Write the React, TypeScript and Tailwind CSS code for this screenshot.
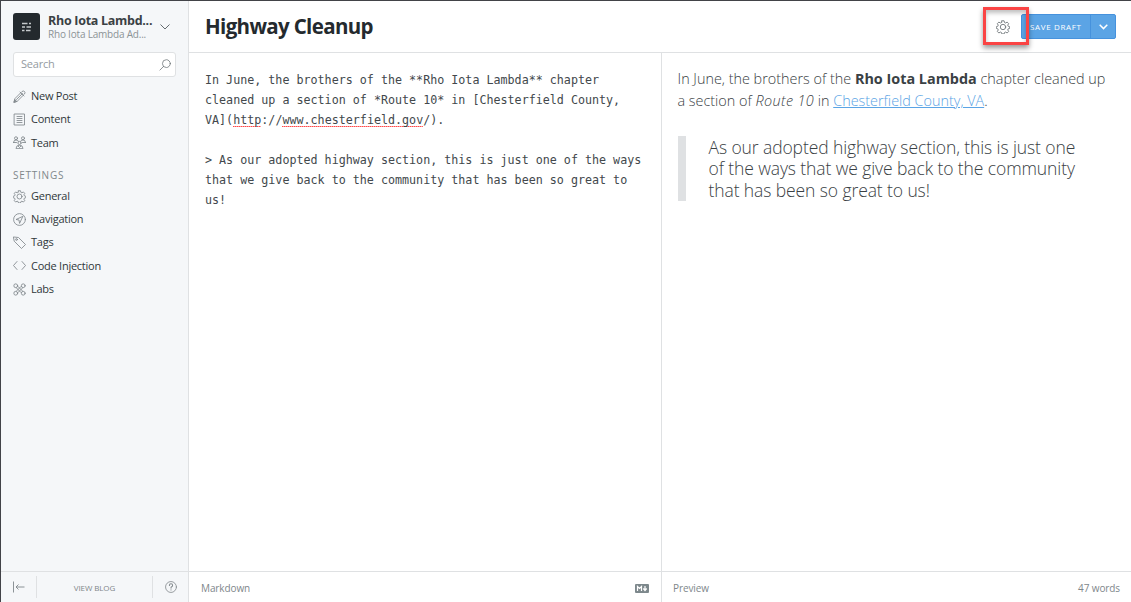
import type { ReactNode } from 'react';

function Icon({ children, className = 'size-[13px]' }: { children: ReactNode; className?: string }) {
  return (
    <svg viewBox="0 0 26 26" className={`shrink-0 ${className}`} fill="none" stroke="currentColor" strokeWidth="1.7" strokeLinecap="round" strokeLinejoin="round">
      {children}
    </svg>
  );
}

const gear = (
  <>
    <path d="M11 1.5h4l.8 3.2 2 .9 2.9-1.7 2.8 2.8-1.7 2.9.9 2 2.8.9v3l-2.8.9-.9 2 1.7 2.9-2.8 2.8-2.9-1.7-2 .9-.8 2.7h-4l-.8-2.7-2-.9-2.9 1.7-2.8-2.8 1.7-2.9-.9-2-2.8-.9v-3l2.8-.9.9-2-1.7-2.9 2.8-2.8 2.9 1.7 2-.9z" />
    <circle cx="13" cy="13" r="5" />
  </>
);

const pen = (
  <>
    <path d="M2 24l2-7L18 3q3-2 5 0t0 5L9 22z" />
    <path d="M14 4l8 8M7 19L19 7" />
    <path d="M2 24l1.500-5 3.500 3.500z" fill="currentColor" />
  </>
);

const content = (
  <>
    <path d="M3 2h20v22H3z" />
    <path d="M8 7h10M8 11h10M8 15h10M8 19h10" />
  </>
);

const team = (
  <>
    <circle cx="6" cy="4.500" r="3" />
    <circle cx="20" cy="4.500" r="3" />
    <circle cx="13" cy="14" r="3.200" />
    <path d="M1 13q0-5 5-5t5 3M25 13q0-5-5-5t-5 3M1 13h6M19 13h6M6 24.500q0-6 7-6t7 6zM10 20l3 3 3-3" />
  </>
);

const compass = (
  <>
    <circle cx="13" cy="13" r="11.800" />
    <path d="M19 7L6 13l6 1 1 6z" />
  </>
);

const tag = (
  <>
    <path d="M1.500 2l9.500 1 14 14-8 8L3 11z" />
    <circle cx="7" cy="7" r="1.800" />
  </>
);

const code = <path d="M8 5L1 13l7 8M18 5l7 8-7 8" />;

const labs = (
  <>
    <circle cx="5.500" cy="5.500" r="3.800" />
    <circle cx="20.500" cy="5.500" r="3.800" />
    <circle cx="5.500" cy="20.500" r="3.800" />
    <circle cx="20.500" cy="20.500" r="3.800" />
    <path d="M7 10l9 9M10 7l9 9M16 7l-9 9M19 10l-9 9" />
  </>
);

function NavItem({ icon, label }: { icon: ReactNode; label: string }) {
  return (
    <a className="flex h-[23.2px] items-center gap-[5.500px] text-[11px] tracking-[-0.25px] text-[#30373a]">
      <Icon className="-ml-[0.5px] size-[13px] text-[#81888c]">{icon}</Icon>
      <span>{label}</span>
    </a>
  );
}

function Misspelled({ children }: { children: ReactNode }) {
  return (
    <span className="bg-[repeating-linear-gradient(90deg,#ff4a4a_0px,#ff4a4a_1px,#ffa0a0_1px,#ffa0a0_2px)] bg-[length:100%_1px] bg-bottom bg-no-repeat">
      {children}
    </span>
  );
}

function Sidebar() {
  return (
    <aside className="flex w-[188px] shrink-0 flex-col border-r border-[#dfe1e3] bg-[#f5f7f9]">
      <div className="flex h-[51px] items-center pl-3">
        <div className="flex size-[27px] shrink-0 items-center justify-center rounded-[3px] bg-[#242a2e]">
          <svg viewBox="0 0 10 10" className="size-[10px]" stroke="#c5cacc" strokeWidth="1.3">
            <path d="M0 1.500h5.500M7 1.500h2M0 5h3M4.500 5H9M0 8.500h2.500M4 8.500h4.500" />
          </svg>
        </div>
        <div className="ml-2 w-[106px] whitespace-nowrap">
          <div className="text-[12.5px] font-bold leading-[15px] tracking-[-0.28px] text-[#3a4144]">Rho Iota Lambd...</div>
          <div className="text-[10px] leading-[13px] tracking-[-0.2px] text-[#8c9396]">Rho Iota Lambda Ad...</div>
        </div>
        <svg viewBox="0 0 10 6" className="ml-[6px] h-[6px] w-[10px]" fill="none" stroke="#646c70">
          <path d="M.5.5L5 5 9.500.5" />
        </svg>
      </div>
      <div className="ml-3 flex h-[25px] w-[163px] items-center justify-between rounded-[3px] border border-[#dfe1e3] bg-white pr-1 pl-[7px] text-[11px] tracking-[-0.2px] text-[#959b9f]">
        <span>Search</span>
        <Icon className="size-[12px] text-[#6d7579]">
          <circle cx="16" cy="10" r="8.500" />
          <path d="M10 16l-8 8" />
        </Icon>
      </div>
      <nav className="mt-[7.800px] flex flex-col pl-3">
        <NavItem icon={pen} label="New Post" />
        <NavItem icon={content} label="Content" />
        <NavItem icon={team} label="Team" />
        <h2 className="mt-[12.900px] h-[17.500px] text-[10px] leading-[17px] tracking-[0.75px] text-[#80878b]">SETTINGS</h2>
        <NavItem icon={gear} label="General" />
        <NavItem icon={compass} label="Navigation" />
        <NavItem icon={tag} label="Tags" />
        <NavItem icon={code} label="Code Injection" />
        <NavItem icon={labs} label="Labs" />
      </nav>
      <footer className="mt-auto flex h-[31px] items-center border-t border-[#dfe1e3] text-[#80878b]">
        <div className="flex h-[22px] w-9 items-center border-r border-[#dfe1e3] pl-[11px]">
          <svg viewBox="0 0 13 12" className="h-3 w-[13px]" fill="none" stroke="currentColor" strokeWidth=".9">
            <path d="M1.500.5v11M4 6h8.500M6.500 3.500L4 6l2.500 2.500" />
          </svg>
        </div>
        <div className="flex h-[22px] w-[116px] items-center justify-center border-r border-[#dfe1e3] pt-[2px] text-[8px] tracking-[-0.1px]">VIEW BLOG</div>
        <div className="flex flex-1 justify-center">
          <Icon className="size-[12px]">
            <circle cx="13" cy="13" r="11.800" />
            <path d="M9.500 10q0-4 3.500-4t3.500 3.500q0 2-2 3t-1.500 3M13 19v.500" strokeWidth="2.200" />
          </Icon>
        </div>
      </footer>
    </aside>
  );
}

function Header() {
  return (
    <header className="flex h-[52px] shrink-0 items-center justify-between border-b border-[#dfe1e3] pr-[15px] pl-4">
      <h1 className="text-[20.500px] font-bold tracking-[-0.65px] text-[#242a2e]">Highway Cleanup</h1>
      <div className="relative flex items-center">
        <Icon className="mr-[11px] size-[14px] text-[#73797d]">{gear}</Icon>
        <div className="flex h-[25px] w-[95px] rounded-[2px] border border-[#4692dd] bg-[#5ba4e5] text-white">
          <span className="flex w-[69px] items-center border-r border-[#4692dd] pl-2 text-[8px] tracking-[0.65px] whitespace-nowrap">SAVE DRAFT</span>
          <span className="flex flex-1 items-center justify-center">
            <svg viewBox="0 0 9 6" className="h-[6px] w-[9px]" fill="none" stroke="white" strokeWidth="1.500">
              <path d="M.7.8l3.800 3.800L8.300.8" />
            </svg>
          </span>
        </div>
        <div className="absolute top-[-7px] left-[-13px] h-[38px] w-[46px] border-[3px] border-[#fa4444] shadow-[0_3px_5px_rgba(0,0,0,0.4),inset_0_3px_4px_rgba(0,0,0,0.25)]" />
      </div>
    </header>
  );
}

function MarkdownPane() {
  return (
    <section className="flex w-[473px] shrink-0 flex-col border-r border-[#dfe1e3]">
      <div className="flex-1 pt-[17px] pl-4 font-['DejaVu_Sans_Mono',monospace] text-[11.700px] leading-5 whitespace-nowrap text-[#42484c]">
        <p>In June, the brothers of the **Rho Iota Lambda** chapter</p>
        <p>cleaned up a section of *Route 10* in [Chesterfield County,</p>
        <p>VA](<Misspelled>http</Misspelled>://<Misspelled>www.chesterfield.gov</Misspelled>/).</p>
        <p className="mt-5">&gt; As our adopted highway section, this is just one of the ways</p>
        <p>that we give back to the community that has been so great to</p>
        <p>us!</p>
      </div>
      <footer className="flex h-[31px] items-center justify-between border-t border-[#dfe1e3] pt-[2px] pr-3 pl-3 text-[10px] tracking-[-0.1px] text-[#80878b]">
        <span>Markdown</span>
        <svg viewBox="0 0 14 9" className="h-[9px] w-[14px]">
          <rect width="14" height="9" rx="1" fill="#7d888c" />
          <path d="M2.500 7V2.500L4.500 4.500 6.500 2.500V7M10 2v4M8.300 4.500L10 6.500l1.700-2" fill="none" stroke="white" strokeWidth="1.200" />
        </svg>
      </footer>
    </section>
  );
}

function PreviewPane() {
  return (
    <section className="flex flex-1 flex-col">
      <div className="flex-1 pt-[15px] pl-[15.5px] whitespace-nowrap text-[#3a4144]">
        <div className="text-[14.400px] leading-[21.800px] font-light">
          <p>In June, the brothers of the <strong className="font-bold">Rho Iota Lambda</strong> chapter cleaned up</p>
          <p>a section of <em className="tracking-[0.35px]">Route 10</em> in <a className="text-[#5ba4e5] underline">Chesterfield County, VA</a>.</p>
        </div>
        <blockquote className="mt-[24px] border-l-8 border-[#dfe1e3] pl-[23px] text-[17.500px] leading-[21.600px] font-light tracking-[-0.1px]">
          <p className="pt-px leading-[21.800px]">As our adopted highway section, this is just one</p>
          <p>of the ways that we give back to the community</p>
          <p className="leading-[21px]">that has been so great to us!</p>
        </blockquote>
      </div>
      <footer className="flex h-[31px] items-center justify-between border-t border-[#dfe1e3] pt-[2px] pr-[11px] pl-[11px] text-[10px] tracking-[-0.1px] text-[#80878b]">
        <span>Preview</span>
        <span>47 words</span>
      </footer>
    </section>
  );
}

export default function App() {
  return (
    <div className="flex h-[602px] w-[1131px] overflow-hidden border-t border-l border-[#424348] bg-white font-['Open_Sans',sans-serif]">
      <Sidebar />
      <main className="flex min-w-0 flex-1 flex-col">
        <Header />
        <div className="flex min-h-0 flex-1">
          <MarkdownPane />
          <PreviewPane />
        </div>
      </main>
    </div>
  );
}
